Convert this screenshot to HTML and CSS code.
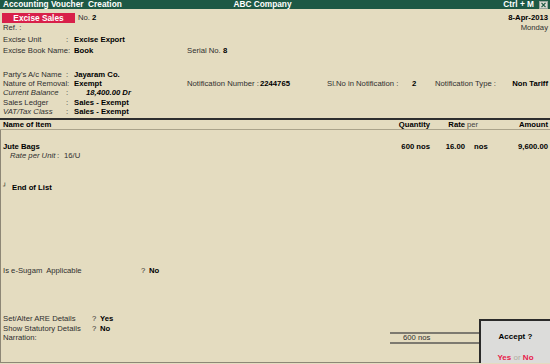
FILE: index.html
```html
<!DOCTYPE html>
<html>
<head>
<meta charset="UTF-8">
<title>Accounting Voucher Creation</title>
<link rel="stylesheet" href="styles.css">
</head>
<body>

<div class="app">
	<div class="titlebar">
		<span class="tb-title">Accounting Voucher&nbsp; Creation</span>
		<span class="tb-company">ABC Company</span>
		<span class="tb-right">Ctrl + M
			<svg class="tb-close" viewBox="0 0 9 8" width="9" height="8">
				<rect x="0.5" y="0.5" width="8" height="7" fill="#d9d9d2" stroke="#9aa59f" />
				<path d="M2.5 1.8l4 4.4M6.5 1.8l-4 4.4" stroke="#1d5945" stroke-width="1.2" />
			</svg>
		</span>
	</div>

	<div class="vhead">
		<div class="row-type">
			<span class="vtype">Excise Sales</span>
			<span class="vno">No. <b>2</b></span>
			<b class="date">8-Apr-2013</b>
		</div>
		<div class="row-ref">
			<span>Ref. :</span>
			<span class="day">Monday</span>
		</div>
		<div class="f-row first">
			<span class="lbl">Excise Unit</span><span class="colon">:</span><b class="val">Excise Export</b>
		</div>
		<div class="f-row">
			<span class="lbl">Excise Book Name:</span><span class="colon"></span><b class="val wide">Book</b>
			<span>Serial No. <b>8</b></span>
		</div>

		<div class="party">
			<div class="p-row">
				<span class="lbl">Party's A/c Name</span><span class="colon">:</span><b class="val">Jayaram Co.</b>
			</div>
			<div class="p-row">
				<span class="lbl">Nature of Removal:</span><span class="colon"></span><b class="val wide">Exempt</b>
				<span class="n-lbl">Notification Number :</span><b class="n-num">2244765</b>
				<span class="n-sl">Sl.No in Notification :</span><b class="n-slv">2</b>
				<span class="n-type">Notification Type :</span><b class="n-typev">Non Tariff</b>
			</div>
			<div class="p-row">
				<i class="lbl">Current Balance</i><span class="colon">:</span><b class="val bal">18,400.00 Dr</b>
			</div>
			<div class="p-row">
				<span class="lbl">Sales Ledger</span><span class="colon">:</span><b class="val">Sales - Exempt</b>
			</div>
			<div class="p-row">
				<i class="lbl">VAT/Tax Class</i><span class="colon">:</span><b class="val">Sales - Exempt</b>
			</div>
		</div>
	</div>

	<div class="rule-thick"></div>

	<div class="cols head-cols">
		<span>Name of Item</span>
		<span class="c-qty">Quantity</span>
		<span class="c-rate">Rate</span>
		<span class="c-per">per</span>
		<span class="c-amt">Amount</span>
	</div>

	<div class="main">
		<div class="cols item">
			<span>Jute Bags</span>
			<span class="c-qty">600 nos</span>
			<span class="c-rate">16.00</span>
			<span class="c-per unit">nos</span>
			<span class="c-amt">9,600.00</span>
		</div>
		<div class="item-rate">
			<i class="r-lbl">Rate per Unit</i><span class="r-colon">:</span><span>16/U</span>
		</div>

		<div class="eol"><span class="eol-mark">┘</span><b>End of List</b></div>

		<div class="esugam">
			<span class="q-lbl">Is e-Sugam&nbsp; Applicable</span><span class="q">?</span><b>No</b>
		</div>

		<div class="footer">
			<div class="opts">
				<div class="o-row"><span class="o-lbl">Set/Alter ARE Details</span><span class="q">?</span><b>Yes</b></div>
				<div class="o-row"><span class="o-lbl">Show Statutory Details</span><span class="q">?</span><b>No</b></div>
				<div class="o-row">Narration:</div>
			</div>
			<div class="total">600 nos</div>
		</div>
	</div>

	<div class="accept">
		<b class="acc-q">Accept ?</b>
		<div class="acc-a"><b>Yes</b> <span class="or">or</span> <b>No</b></div>
	</div>
</div>

</body>
</html>
```

FILE: styles.css
```css
html, body {
	margin: 0;
	padding: 0;
	background: #e4dcc0;
	overflow: hidden;
}
body {
	color: #2f2f2f;
	font-family: "Liberation Sans", Arial, sans-serif;
	font-size: 7.7px;
}
b {
	color: #000;
}
.app {
	display: flex;
	flex-direction: column;
	height: 363px;
	position: relative;
	width: 550px;
}

/* Title bar */
.titlebar {
	background: #1d5945;
	color: #fff;
	display: grid;
	font-size: 8.3px;
	font-weight: bold;
	grid-template-columns: 1fr auto 1fr;
	height: 9px;
	line-height: 9px;
	padding: 0 2px 0 3px;
	white-space: nowrap;
}
.tb-company {
	margin-right: 26px;
}
.tb-right {
	align-items: center;
	display: flex;
	gap: 5px;
	justify-content: flex-end;
}
.tb-close {
	display: block;
}

/* Voucher head */
.vhead {
	padding: 4px 2px 0 3px;
	white-space: nowrap;
}
.row-type {
	display: flex;
	height: 10px;
	line-height: 10px;
}
.vtype {
	background: #d8204a;
	color: #fff;
	font-size: 8.3px;
	font-weight: bold;
	margin-left: -1px;
	text-align: center;
	width: 73px;
}
.vno {
	margin-left: 3px;
}
.date {
	margin-left: auto;
}
.row-ref {
	display: flex;
	line-height: 9px;
}
.day {
	margin-left: auto;
}
.f-row {
	display: flex;
	line-height: 11px;
}
.f-row.first {
	margin-top: 2px;
}
.lbl {
	display: inline-block;
	width: 63px;
}
.colon {
	display: inline-block;
	width: 8px;
}
.val.wide {
	width: 113px;
}
.party {
	margin-top: 13.6px;
}
.p-row {
	display: flex;
	line-height: 9.4px;
}
.val.bal {
	font-style: italic;
	padding-left: 12px;
}
.n-lbl {
	width: 73px;
}
.n-num {
	width: 67px;
}
.n-sl {
	width: 85px;
}
.n-slv {
	width: 23px;
}
.n-typev {
	flex: 1;
	text-align: right;
}

.rule-thick {
	background: #2e2e2e;
	height: 2px;
	margin-top: 0.9px;
}

/* Item columns */
.cols {
	display: grid;
	grid-template-columns: 1fr 50px 35px 23px 60px;
	white-space: nowrap;
}
.head-cols {
	border-bottom: 1px solid #aaa38b;
	color: #000;
	font-weight: bold;
	line-height: 9px;
	padding: 0 2px 0 3px;
}
.c-qty, .c-rate, .c-amt {
	text-align: right;
}
.head-cols .c-per {
	color: #444;
	font-weight: normal;
	padding-left: 2px;
}
.main {
	border-bottom: 1px solid #8d8776;
	border-left: 1px solid #8d8776;
	display: flex;
	flex: 1;
	flex-direction: column;
	padding: 0 2px;
}
.item {
	color: #000;
	font-weight: bold;
	line-height: 9.5px;
	margin-top: 12px;
}
.unit {
	padding-left: 9px;
}
.item-rate {
	display: flex;
	line-height: 9.5px;
	padding-left: 7px;
}
.r-lbl {
	width: 47px;
}
.r-colon {
	width: 7px;
}
.eol {
	display: flex;
	height: 9px;
	line-height: 9px;
	margin-top: 22.5px;
}
.eol-mark {
	color: #000;
	font-family: "DejaVu Sans", sans-serif;
	font-size: 6px;
	line-height: 6px;
	width: 9px;
}
.esugam {
	display: flex;
	line-height: 9px;
	margin-top: 74.4px;
}
.q-lbl {
	width: 138px;
}
.q {
	width: 8px;
}
.footer {
	display: flex;
	margin-top: 39px;
}
.opts {
	flex: 1;
}
.o-row {
	display: flex;
	line-height: 9.35px;
}
.o-lbl {
	width: 89px;
}
.total {
	border-bottom: 2px solid #7d7a70;
	border-top: 2px solid #7d7a70;
	box-sizing: border-box;
	height: 12px;
	line-height: 8px;
	margin: 17.7px 69px 0 0;
	padding-left: 13px;
	width: 89px;
}

/* Accept popup sits over the bottom right corner */
.accept {
	background: #dcdcda;
	border-left: 2px solid #2a2a2a;
	border-top: 2px solid #2a2a2a;
	bottom: -1px;
	box-sizing: border-box;
	height: 45px;
	position: absolute;
	right: 0;
	text-align: center;
	width: 71px;
}
.acc-q {
	display: block;
	font-size: 8px;
	line-height: 9px;
	margin-top: 11px;
}
.acc-a {
	font-size: 8px;
	line-height: 9px;
	margin-top: 12px;
}
.acc-a b {
	color: #e8204a;
}
.or {
	color: #b0aca0;
}
```
